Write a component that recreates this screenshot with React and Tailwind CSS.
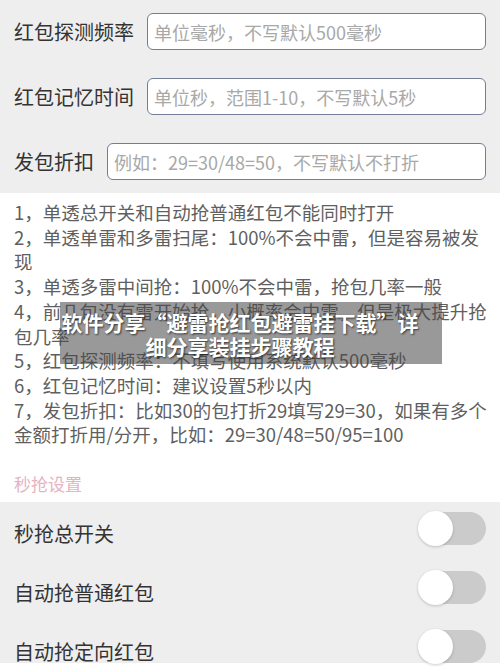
import { useState } from "react";

const fields = [
	{ label: "红包探测频率", placeholder: "单位毫秒，不写默认500毫秒" },
	{ label: "红包记忆时间", placeholder: "单位秒，范围1-10，不写默认5秒" },
	{ label: "发包折扣", placeholder: "例如：29=30/48=50，不写默认不打折" },
];

// each tip is split where the app breaks it
const tips = [
	["1，单透总开关和自动抢普通红包不能同时打开"],
	["2，单透单雷和多雷扫尾：100%不会中雷，但是容易被发", "现"],
	["3，单透多雷中间抢：100%不会中雷，抢包几率一般"],
	["4，前几包没有雷开始抢，小概率会中雷，但是极大提升抢", "包几率"],
	["5，红包探测频率：不填写使用系统默认500毫秒"],
	["6，红包记忆时间：建议设置5秒以内"],
	["7，发包折扣：比如30的包打折29填写29=30，如果有多个", "金额打折用/分开，比如：29=30/48=50/95=100"],
];

function Toggle({ on, onChange }) {
	return (
		<button
			onClick={onChange}
			className={`relative w-[67px] h-[33px] rounded-full shrink-0 ${on ? "bg-[#f0616a]" : "bg-[#cbcbcb]"}`}
		>
			<span
				className={`absolute top-[-1px] w-[35px] h-[35px] rounded-full bg-white shadow-[0_1px_3px_rgba(0,0,0,0.2)] ${on ? "left-[32px]" : "left-[-1px]"}`}
			/>
		</button>
	);
}

export default function App() {
	const [switches, setSwitches] = useState([false, false, false]);
	const flip = (i) => setSwitches((s) => s.map((v, j) => (j === i ? !v : v)));

	return (
		<div className="relative w-[500px] h-[667px] overflow-hidden bg-white font-['Noto_Sans_CJK_SC','Noto_Sans',sans-serif]">
			{/* Input fields */}
			<div className="bg-[#eeeeee] pt-[13px] pb-[13px] flex flex-col gap-[28px]">
				{fields.map((f) => (
					<div key={f.label} className="flex items-center gap-[13px] pl-[14px] pr-[14px]">
						<span className="text-[20px] text-[#333333] leading-none whitespace-nowrap">{f.label}</span>
						<input
							placeholder={f.placeholder}
							className="flex-1 min-w-0 h-[37px] rounded-[6px] border-[1.5px] border-[#737d97] bg-white px-[6px] font-['Noto_Sans_CJK_SC','Noto_Sans',sans-serif] text-[18px] text-[#333] placeholder:text-[#a8a8a8] outline-none"
						/>
					</div>
				))}
			</div>

			{/* Tips */}
			<div className="pt-[7px] pl-[14px] text-[18.5px] leading-[24.7px] text-[#5f5f5f] whitespace-nowrap">
				{tips.map((lines) => (
					<p key={lines[0]}>
						{lines.map((l, i) => (
							<span key={i} className="block">{l}</span>
						))}
					</p>
				))}
			</div>

			<div className="pt-[25px] pb-[6px] pl-[14px] text-[17px] leading-[24px] text-[#e5b3bf]">秒抢设置</div>

			{/* Switches */}
			<div className="bg-[#eeeeee] pt-[10px] flex flex-col gap-[26px]">
				{["秒抢总开关", "自动抢普通红包", "自动抢定向红包"].map((label, i) => (
					<div key={label} className="flex items-center justify-between h-[33px] pl-[14px] pr-[14px]">
						<span className="text-[20px] text-[#333333] leading-none translate-y-[5px]">{label}</span>
						<Toggle on={switches[i]} onChange={() => flip(i)} />
					</div>
				))}
			</div>

			{/* Title banner */}
			<div className="absolute left-[60px] top-[302px] w-[382px] pt-[8px] pb-[6px] pl-0 pr-[22px] bg-[rgba(70,70,70,0.55)] text-center text-white font-bold text-[21px] leading-[24px] [text-shadow:1px_1px_2px_rgba(0,0,0,0.65)]">
				软件分享“避雷抢红包避雷挂下载”详细分享装挂步骤教程
			</div>
		</div>
	);
}
